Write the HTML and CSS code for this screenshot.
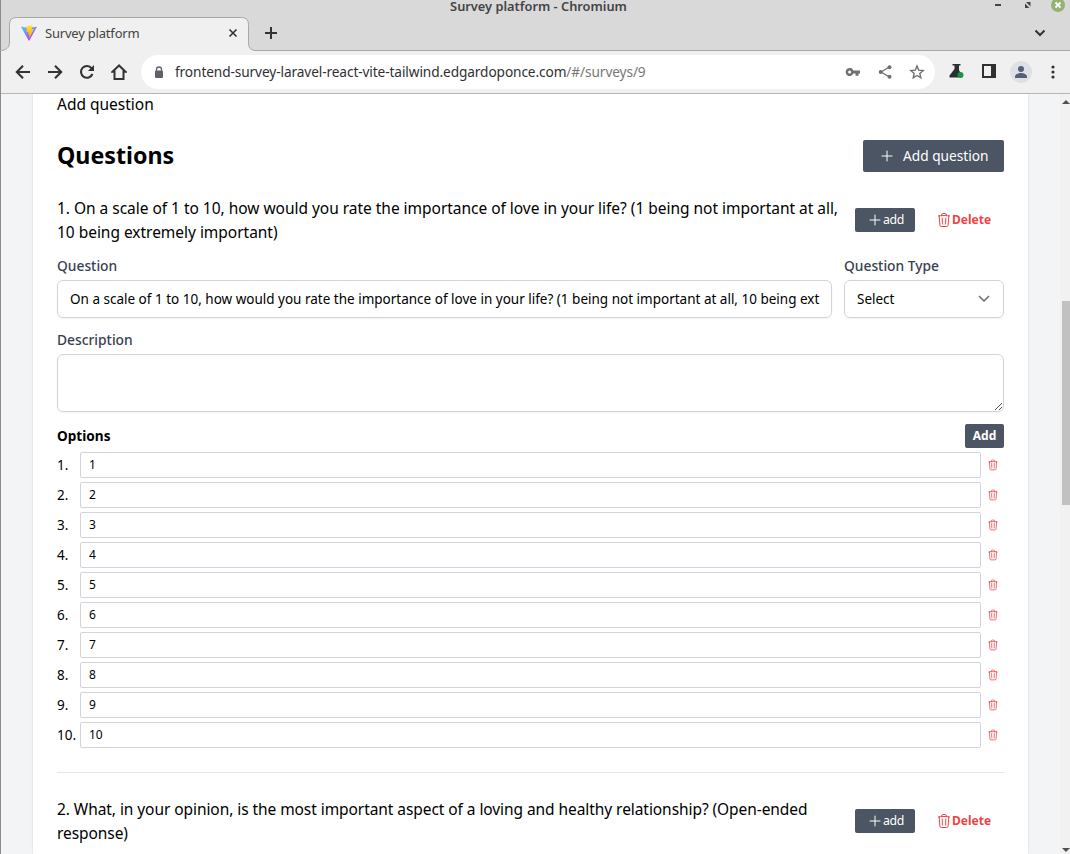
FILE: index.html
```html
<!DOCTYPE html>
<html lang="en">
<head>
<meta charset="utf-8">
<title>Survey platform</title>
<link rel="stylesheet" href="styles.css">
</head>
<body>
<svg class="defs" aria-hidden="true">
  <symbol id="trash" viewBox="0 0 24 24"><path d="M14.74 9l-.346 9m-4.788 0L9.26 9m9.968-3.21c.342.052.682.107 1.022.166m-1.022-.165L18.16 19.673a2.25 2.25 0 01-2.244 2.077H8.084a2.25 2.25 0 01-2.244-2.077L4.772 5.79m14.456 0a48.108 48.108 0 00-3.478-.397m-12 .562c.34-.059.68-.114 1.022-.165m0 0a48.11 48.11 0 013.478-.397m7.5 0v-.916c0-1.18-.91-2.164-2.09-2.201a51.964 51.964 0 00-3.32 0c-1.18.037-2.09 1.022-2.09 2.201v.916m7.5 0a48.667 48.667 0 00-7.5 0" fill="none" stroke="currentColor" stroke-width="1.5" stroke-linecap="round" stroke-linejoin="round"/></symbol>
  <symbol id="plus" viewBox="0 0 24 24"><path d="M12 4.500v15m7.500-7.500h-15" fill="none" stroke="currentColor" stroke-width="1.5" stroke-linecap="round"/></symbol>
</svg>
<div class="window">
  <header class="chrome">
    <div class="titlebar"><span class="window-title">Survey platform - Chromium</span>
      <svg class="window-controls" width="76" height="14" viewBox="0 0 76 14"><path d="M1 5h6" stroke="#444" stroke-width="2"/><path d="M32 2h4.500v4.500zM31 3.500v4.500h4.500z" fill="#444"/><circle cx="64" cy="5" r="7" fill="#92b372"/><path d="M61.500 2.500l5 5m0-5l-5 5" stroke="#fff" stroke-width="2"/></svg>
    </div>
    <div class="tabstrip">
      <svg class="tab-shape" width="270" height="35" viewBox="0 0 270 35"><path d="M0 35V34.500C6 34.500 9.500 32 9.500 26V8.500q0-7 7-7H241.500q7 0 7 7V27q0 7.500 7.500 7.500V35z" fill="#f0f0f0"/><path d="M0 34.500C6 34.500 9.500 32 9.500 26V8.500q0-7 7-7H241.500q7 0 7 7V27q0 7.500 7.500 7.500H270" fill="none" stroke="#a7a7a7"/></svg>
      <div class="tab">
        <svg width="16" height="16" viewBox="0 0 32 32"><defs><linearGradient id="vite-a" x1="0" y1="0" x2=".6" y2="1"><stop stop-color="#41d1ff"/><stop offset="1" stop-color="#bd34fe"/></linearGradient><linearGradient id="vite-b" x1="0" y1="0" x2="0" y2="1"><stop stop-color="#ffea83"/><stop offset=".1" stop-color="#ffdd35"/><stop offset="1" stop-color="#ffa800"/></linearGradient></defs><path d="M31.500 4.700L16.800 30.900q-.7 1-1.400 0L.4 4.700q-.5-1.200.9-1.100L16 6.200 30.700 3.500q1.300 0 .8 1.200z" fill="url(#vite-a)"/><path d="M22.800 0L12 2.200l-.4.400L11 13.900l.5.500 3-.7.600.5-.9 4.400.5.600 1.900-.6.600.6-1.500 7q.2 1 .8.300l9.100-18-.6-.7-3.200.6-.5-.6 2.100-7.200z" fill="url(#vite-b)"/></svg>
        <span class="tab-title">Survey platform</span>
        <svg class="tab-close" width="10" height="10" viewBox="0 0 10 10"><path d="M1.500 1.500l7 7m0-7l-7 7" stroke="#333" stroke-width="1.600"/></svg>
      </div>
      <svg class="new-tab" width="14" height="14" viewBox="0 0 14 14"><path d="M7 1v12M1 7h12" stroke="#333" stroke-width="2"/></svg>
      <svg class="tab-menu" width="12" height="8" viewBox="0 0 12 8"><path d="M1.500 1.500L6 6l4.500-4.500" fill="none" stroke="#333" stroke-width="2"/></svg>
    </div>
    <div class="toolbar">
      <nav class="nav">
        <svg width="16" height="16" viewBox="0 0 16 16"><path d="M15 8H2.500M8 1.800L1.800 8 8 14.200" fill="none" stroke="#333" stroke-width="2.100"/></svg>
        <svg width="16" height="16" viewBox="0 0 16 16"><path d="M1 8h12.500M8 1.800L14.200 8 8 14.200" fill="none" stroke="#333" stroke-width="2.100"/></svg>
        <svg width="16" height="16" viewBox="0 0 16 16"><path d="M13.400 10a5.900 5.900 0 1 1-.8-5.700L14 5.700" fill="none" stroke="#333" stroke-width="2.100"/><path d="M15 .9V7H8.900z" fill="#333"/></svg>
        <svg width="16" height="16" viewBox="0 0 16 16"><path d="M8 1.500L1.500 7.700h2V15h9V7.700h2z" fill="none" stroke="#333" stroke-width="2"/></svg>
      </nav>
      <div class="address">
        <svg width="10" height="13" viewBox="0 0 10 13"><path d="M2.500 5V3.500a2.500 2.500 0 0 1 5 0V5" fill="none" stroke="#5f6368" stroke-width="1.300"/><rect x="1" y="4.500" width="8" height="7.500" rx="1" fill="#5f6368"/></svg>
        <span class="url"><span class="host">frontend-survey-laravel-react-vite-tailwind.edgardoponce.com</span><span class="path">/#/surveys/9</span></span>
        <div class="address-actions">
          <svg width="16" height="16" viewBox="0 0 16 16"><path d="M8.300 6.400a4 4 0 1 0 0 3.200h2.200v2.200h3V9.600H15V6.400z" fill="#707070"/><circle cx="4.600" cy="8" r="1.500" fill="#fff"/></svg>
          <svg width="16" height="16" viewBox="0 0 16 16"><path d="M12.500 3L4 8l8.500 5" fill="none" stroke="#707070" stroke-width="1.300"/><g fill="#707070"><circle cx="12.500" cy="3.200" r="2"/><circle cx="3.700" cy="8" r="2"/><circle cx="12.500" cy="12.800" r="2"/></g></svg>
          <svg width="16" height="16" viewBox="0 0 16 16"><path d="M8 2l1.700 4.100 4.500.4-3.400 2.900 1 4.400L8 11.500l-3.800 2.300 1-4.400-3.400-2.900 4.500-.4z" fill="none" stroke="#707070" stroke-width="1.400"/></svg>
        </div>
      </div>
      <div class="extensions">
        <svg class="flask" width="16" height="16" viewBox="0 0 16 16"><path d="M4.500 1h8v1.500H11V7l1.500 3-1.500 4.500H3q-2.500 0-1.300-2.300L6.500 6V2.500h-2z" fill="#2d3033"/><circle cx="12.500" cy="12" r="3" fill="#1e9142"/></svg>
        <svg class="panel" width="14" height="14" viewBox="0 0 14 14"><path d="M0 0h14v14H0zM2 2v10h7V2z" fill="#303030" fill-rule="evenodd"/></svg>
        <svg class="avatar" width="22" height="22" viewBox="0 0 22 22"><circle cx="11" cy="11" r="11" fill="#dde1e6"/><circle cx="11" cy="8" r="3" fill="#556078"/><path d="M5 17v-1.500c0-2 3.500-3.500 6-3.500s6 1.500 6 3.500V17z" fill="#556078"/></svg>
        <svg class="kebab" width="4" height="14" viewBox="0 0 4 14"><g fill="#333"><circle cx="2" cy="2" r="1.600"/><circle cx="2" cy="7" r="1.600"/><circle cx="2" cy="12" r="1.600"/></g></svg>
      </div>
    </div>
  </header>
  <div class="viewport">
    <main class="card">
      <div class="intro"><span>Add question</span></div>
      <div class="section-head"><h2>Questions</h2><button class="btn btn-large"><svg width="16" height="16"><use href="#plus"/></svg><span>Add question</span></button></div>
      <section class="question">
        <div class="question-head">
          <p class="scale-text"><span>1. On a scale of 1 to 10, how would you rate the importance of love in your life? (1 being not important at all,</span><br><span>10 being extremely important)</span></p>
          <div class="actions"><button class="btn btn-small"><svg width="16" height="16"><use href="#plus"/></svg><span>add</span></button><button class="delete"><svg width="16" height="16"><use href="#trash"/></svg><span>Delete</span></button></div>
        </div>
        <div class="fields">
          <div><label>Question</label><div class="input"><span>On a scale of 1 to 10, how would you rate the importance of love in your life? (1 being not important at all, 10 being ext</span></div></div>
          <div><label>Question Type</label><div class="input select"><span>Select</span><svg width="12" height="8" viewBox="0 0 12 8"><path d="M1.500 1.500L6 6l4.500-4.500" fill="none" stroke="#6b7280" stroke-width="1.700" stroke-linecap="round" stroke-linejoin="round"/></svg></div></div>
        </div>
        <div class="description"><label>Description</label><div class="textarea"><svg width="9" height="9" viewBox="0 0 9 9"><path d="M1 8l7-7M5 8l3-3" stroke="#555" stroke-width="1"/></svg></div></div>
        <div class="options-head"><h4>Options</h4><button class="btn btn-add"><span>Add</span></button></div>
        <div class="options">
          <div class="option"><span>1.</span><div>1</div><svg><use href="#trash"/></svg></div>
          <div class="option"><span>2.</span><div>2</div><svg><use href="#trash"/></svg></div>
          <div class="option"><span>3.</span><div>3</div><svg><use href="#trash"/></svg></div>
          <div class="option"><span>4.</span><div>4</div><svg><use href="#trash"/></svg></div>
          <div class="option"><span>5.</span><div>5</div><svg><use href="#trash"/></svg></div>
          <div class="option"><span>6.</span><div>6</div><svg><use href="#trash"/></svg></div>
          <div class="option"><span>7.</span><div>7</div><svg><use href="#trash"/></svg></div>
          <div class="option"><span>8.</span><div>8</div><svg><use href="#trash"/></svg></div>
          <div class="option"><span>9.</span><div>9</div><svg><use href="#trash"/></svg></div>
          <div class="option"><span>10.</span><div>10</div><svg><use href="#trash"/></svg></div>
        </div>
      </section>
      <hr>
      <section class="question">
        <div class="question-head">
          <p class="open-text"><span>2. What, in your opinion, is the most important aspect of a loving and healthy relationship? (Open-ended</span><br><span>response)</span></p>
          <div class="actions"><button class="btn btn-small"><svg width="16" height="16"><use href="#plus"/></svg><span>add</span></button><button class="delete"><svg width="16" height="16"><use href="#trash"/></svg><span>Delete</span></button></div>
        </div>
      </section>
    </main>
    <div class="scrollbar"><i class="arrow up"></i><div class="thumb"></div><i class="arrow down"></i></div>
  </div>
</div>
</body>
</html>
```

FILE: styles.css
```css
*{box-sizing:border-box}
body{margin:0;overflow:hidden;font-family:"Noto Sans","Open Sans",sans-serif;font-size:15.5px;line-height:24px;color:#000}
svg{display:block;flex:none}
button{border:0;margin:0;padding:0;background:none;font:inherit}
h2,h4,p{margin:0}
span{white-space:nowrap}
.defs{position:absolute;width:0;height:0}
.window{width:1070px;height:854px;border-left:1px solid #8b8b8d;display:flex;flex-direction:column}
.chrome{height:94px;flex:none;background:#d9d9d9}
.titlebar{height:16px;display:grid;grid-template-columns:1fr auto 1fr;align-items:start;padding-left:6px}
.window-title{grid-column:2;font-size:12.8px;font-weight:600;line-height:12px;color:#444}
.window-controls{justify-self:end}
.tabstrip{height:35px;display:flex;align-items:center;position:relative;border-bottom:1px solid #a7a7a7}
.tab-shape{position:absolute;left:-1px;top:0}
.tab{position:relative;width:247px;height:36px;display:flex;align-items:center;padding:0 10px 0 20px}
.tab-title{margin-left:8px;font-size:13px;letter-spacing:-.2px;color:#444}
.tab-close{margin-left:auto}
.new-tab{position:relative;margin-left:16px}
.tab-menu{margin-left:auto;margin-right:24px}
.toolbar{height:43px;background:#f0f0f0;border-bottom:1px solid #b5b5b5;display:flex;align-items:center}
.nav{display:flex;gap:16px;padding-left:14px;width:140px;padding-bottom:1px}
.address{height:34px;width:794px;border-radius:17px;background:#fff;display:flex;align-items:center;padding:0 10px 0 13px}
.url{margin-left:11px;font-size:13.7px;line-height:22px;letter-spacing:-.11px;color:#303134}
.path{color:#777}
.address-actions{margin-left:auto;display:flex;gap:16px}
.extensions{display:flex;align-items:center;margin-left:13px}
.flask{margin-bottom:2px}
.panel{margin-left:18px;margin-bottom:2px}
.avatar{margin-left:14px}
.kebab{margin-left:19px;margin-bottom:1px}
.viewport{height:760px;background:#f3f4f6;display:flex;overflow:hidden}
.card{width:995px;margin-left:32px;background:#fff;padding:0 24px;box-shadow:0 0 2px #0002;flex:none}
.intro{height:46px;line-height:20px}
.section-head{height:32px;display:flex;align-items:center;justify-content:space-between}
h2{font-size:23.2px;line-height:30px;font-weight:700;padding-bottom:2px}
.btn{background:#4b5563;color:#fff;border-radius:2px;display:flex;align-items:center}
.btn-large{width:141px;height:32px;padding-left:16px;gap:8px;font-size:13.7px}
.question-head{margin-top:24px;height:48px;display:flex;align-items:center;justify-content:space-between}
.scale-text{letter-spacing:-.027px}
.open-text{letter-spacing:-.07px}
.actions{display:flex;width:149px;flex:none}
.btn-small{width:60px;height:24px;padding-left:12px;font-size:12.3px;letter-spacing:-.3px}
.btn-small span{line-height:22px}
.delete{display:flex;align-items:center;margin-left:21px;color:#ef4444;font-size:12px;font-weight:700}
.fields{display:grid;grid-template-columns:775px 160px;gap:12px;margin-top:12px}
label{display:block;width:max-content;font-size:13.8px;line-height:20px;font-weight:500;color:#374151}
.input{height:38px;margin-top:4px;border:1px solid #d1d5db;border-radius:6px;box-shadow:0 1px 2px #0000000d;padding:0 12px;display:flex;align-items:center;justify-content:space-between;font-size:13.5px}
.select svg{margin-right:1px}
.description{margin-top:12px}
.textarea{height:58px;margin-top:4px;border:1px solid #d1d5db;border-radius:6px;box-shadow:0 1px 2px #0000000d;display:flex;align-items:flex-end;justify-content:flex-end}
.options-head{margin-top:12px;height:24px;display:flex;align-items:center;justify-content:space-between}
h4{font-size:13.6px}
.btn-add{width:39px;height:24px;justify-content:center;font-size:12px;font-weight:700}
.options{display:grid;gap:4px;margin-top:4px}
.option{height:26px;display:grid;grid-template-columns:23px 901px 18px;align-items:center;font-size:13.5px}
.option div{height:26px;border:1px solid #d1d5db;border-radius:2px;padding-left:8px;font-size:12px}
.option svg{width:12px;height:12px;margin-left:6px;color:#ef4444}
hr{border:0;border-top:1px solid #e5e7eb;margin:24px 0 0}
.scrollbar{margin-left:auto;width:10px;flex:none;background:#f1f1f1;display:flex;flex-direction:column;align-items:flex-end}
.thumb{width:8px;height:204px;margin-top:197px;background:#c1c1c1}
.arrow{border:solid transparent;border-width:0 4px;width:8px;height:0}
.up{margin-top:6px;border-bottom:4px solid #505050}
.down{margin-top:auto;margin-bottom:2px;border-top:4px solid #505050}
```
